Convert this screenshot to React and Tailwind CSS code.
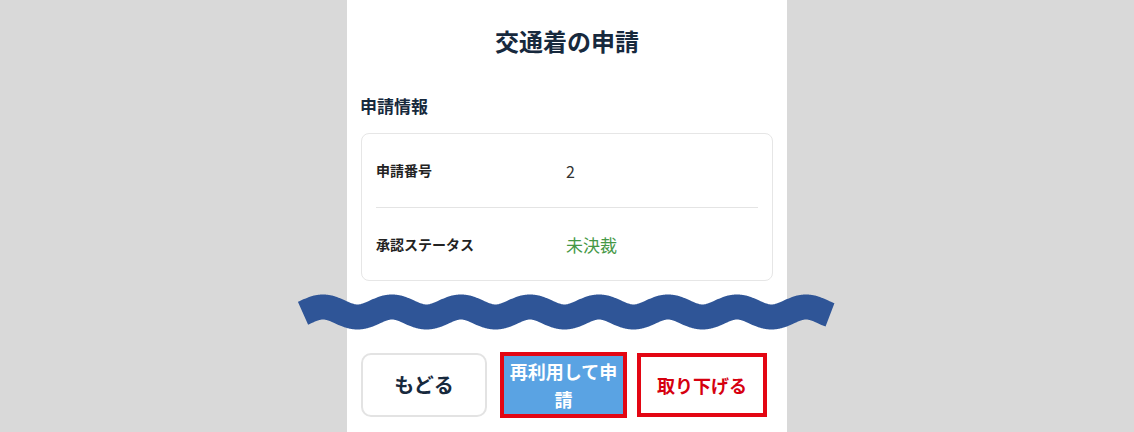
import React from "react";

function Wave() {
  // center line of a sine wave band, drawn as a thick stroke
  const pts = [];
  const x0 = 303, x1 = 830;
  for (let x = x0; x <= x1; x += 1) {
    const y = 312 - 5 * Math.cos((2 * Math.PI * (x - 323)) / 69);
    pts.push(`${x},${y.toFixed(2)}`);
  }
  const d = "M" + pts.join(" L");
  return (
    <svg
      className="absolute left-0 top-0 pointer-events-none"
      width="1134"
      height="432"
      viewBox="0 0 1134 432"
    >
      <path d={d} fill="none" stroke="#2f5597" strokeWidth="25" strokeLinecap="butt" strokeLinejoin="round" />
    </svg>
  );
}

export default function App() {
  const font = { fontFamily: '"Noto Sans CJK JP", "Noto Sans", sans-serif' };
  return (
    <div className="relative w-[1134px] h-[432px] bg-[#d9d9d9] overflow-hidden" style={font}>
      <div className="mx-auto w-[440px] h-full bg-white px-[14px]">
        <h1 className="pt-[23px] text-center text-[24px] leading-[36px] font-bold text-[#17293d]">
          交通着の申請
        </h1>
        <h2 className="mt-[35px] -ml-px text-[17px] leading-[24px] font-bold text-[#17293d]">
          申請情報
        </h2>
        <div className="mt-[15px] h-[148px] rounded-[8px] border border-[#e6e6e6] px-[14px]">
          <div className="flex h-[74px] items-center border-b border-[#e4e4e4]">
            <div className="w-[190px] text-[14px] font-bold text-[#222]">申請番号</div>
            <div className="text-[16px] text-[#333]">2</div>
          </div>
          <div className="flex h-[73px] items-center">
            <div className="w-[190px] text-[14px] font-bold text-[#222]">承認ステータス</div>
            <div className="text-[17px] text-[#459846]">未決裁</div>
          </div>
        </div>
        <div className="mt-[71px] flex items-center">
          <button className="w-[126px] h-[64px] rounded-[10px] border-2 border-[#e3e3e3] bg-white text-[20px] font-bold text-[#17293d]">
            もどる
          </button>
          <button className="ml-[13px] w-[127px] h-[66px] border-4 border-[#e30613] bg-[#5aa3e3] px-[2px] text-[18px] leading-[28px] font-bold text-white">
            再利用して申請
          </button>
          <button className="ml-[10px] w-[130px] h-[64px] border-4 border-[#e30613] bg-white text-[18px] font-bold text-[#d6000f]">
            取り下げる
          </button>
        </div>
      </div>
      <Wave />
    </div>
  );
}
